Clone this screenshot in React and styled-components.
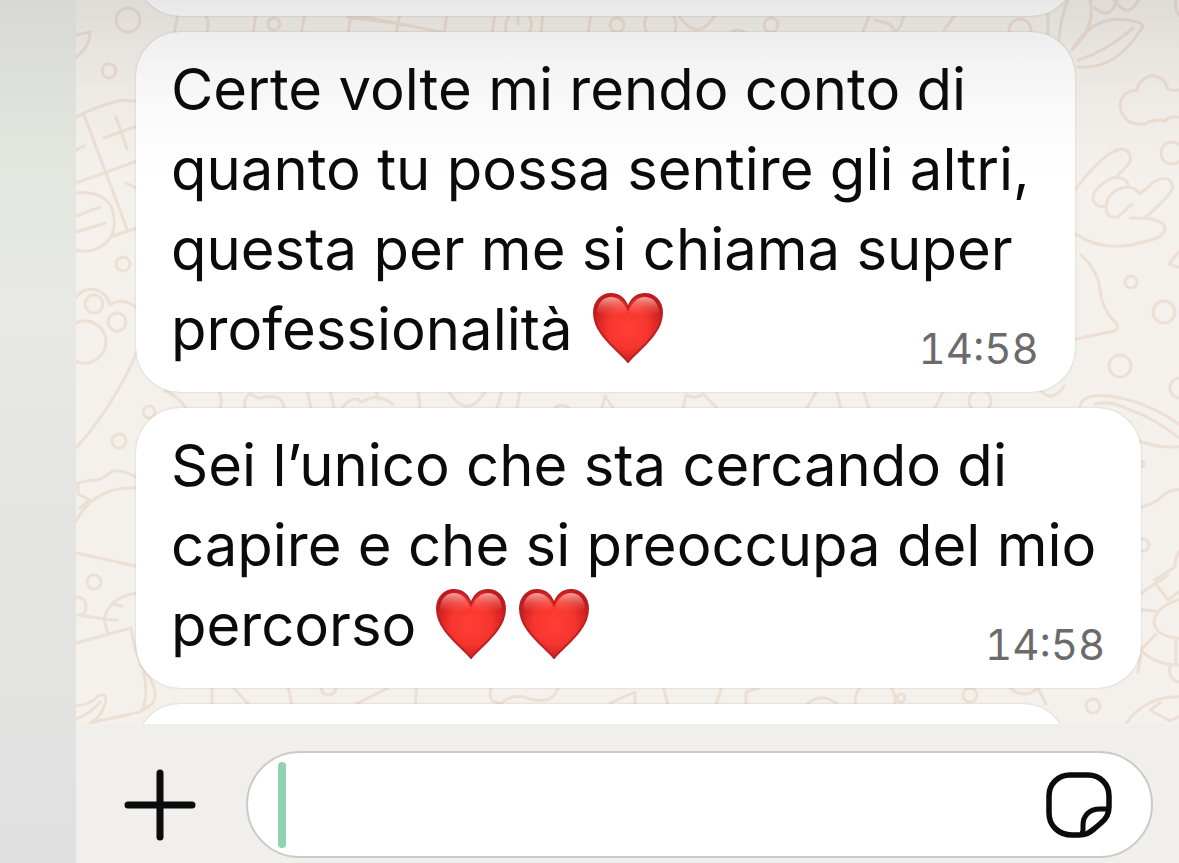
import React, { useState } from "react";
import styled, { createGlobalStyle } from "styled-components";

const messages = [
  {
    id: 1,
    lines: [
      "Certe volte mi rendo conto di",
      "quanto tu possa sentire gli altri,",
      "questa per me si chiama super",
      "professionalità",
    ],
    hearts: 1,
    time: "14:58",
  },
  {
    id: 2,
    lines: [
      "Sei l’unico che sta cercando di",
      "capire e che si preoccupa del mio",
      "percorso",
    ],
    hearts: 2,
    time: "14:58",
  },
];

// doodles of the chat wallpaper: [cx, cy, r]
const dots = [
  [128, 20, 12],
  [109, 71, 7],
  [123, 264, 7],
  [94, 304, 9],
  [117, 322, 9],
  [119, 441, 7],
  [149, 412, 6],
  [94, 582, 7],
  [274, 24, 6],
  [617, 25, 7],
  [771, 25, 7],
  [1020, 30, 11],
  [1172, 153, 11],
  [1131, 282, 6],
  [1164, 312, 11],
  [1120, 366, 11],
  [1180, 388, 10],
  [980, 401, 11],
  [1141, 464, 3],
  [1143, 545, 6],
  [901, 698, 4],
  [970, 695, 7],
  [1093, 706, 7],
];

const doodles = [
  // leaf and calculator
  "M76 35L90 32Q90 47 76 57",
  "M76 117Q100 105 118 101Q128 99 140 102M84 115L127 229M76 183L140 160M116 117L127 149M104 138L140 125M76 150L84 146",
  "M76 193Q102 190 112 208Q120 236 100 247Q88 254 76 250M76 216L100 207M76 232L105 223M113 236L140 227M126 183L140 190",
  // bear paw
  "M76 297A19 19 0 0 1 110 305A20 20 0 0 1 140 314M76 323A21 21 0 1 1 76 361",
  "M140 345Q115 405 76 448M165 391Q178 396 186 408",
  "M76 484Q85 480 98 480Q107 476 113 471Q122 469 140 479M78 484V494L90 500L80 508M76 521Q95 485 140 488M76 553L140 567",
  // cup with a plant
  "M76 597Q86 597 86 607Q86 616 78 615L104 619Q110 595 140 593M104 619L108 634M112 604L122 606M104 619L117 620",
  "M76 643L131 628Q134 650 143 670Q150 700 140 712L90 723M140 665Q162 690 152 704L140 712M76 706Q90 705 98 696Q106 692 106 700Q103 715 92 722M76 719Q90 714 100 702",
  // strip above the first message
  "M178 14L174 34M205 14Q211 24 206 34M256 14L253 34M305 14L301 34M351 14L348 34M360 16L441 32M393 23L348 17M400 14L396 34M447 14L444 34M495 14L492 34M510 14Q503 24 507 34M528 14Q535 24 528 34M518 14V24M543 14L541 34M591 14L588 34M648 14Q641 24 648 34M672 14Q679 24 674 34M678 14Q697 45 716 14M730 33Q738 27 746 33M870 14L862 34M875 20L890 24Q899 40 904 14M956 14L944 30M1048 14V34",
  // strip between the messages
  "M219 390Q223 400 220 408M245 408Q243 398 250 394Q258 400 265 397Q283 394 284 408M307 390L311 408M330 390L334 408M342 408Q352 394 362 402Q376 392 393 404M376 390L378 400M418 390L420 408M448 390Q467 422 486 390M502 390L497 408M520 390L517 408M555 408Q562 402 569 408M602 408L605 396L613 408M683 408L686 395Q696 400 703 394L717 408M817 390L807 408M836 390L841 408M863 390L869 408M944 390L935 408M1040 390Q1052 404 1064 386",
  // strip under the last message
  "M212 686V705M234 688L248 704M288 686L292 705M321 686Q321 695 328 695Q336 695 336 686M356 704L388 688M417 686L415 705M491 688Q487 703 501 703Q515 692 530 699Q552 705 558 688M610 703L635 692V704M663 686L668 705M722 686L716 705M746 705V692L758 688M807 704Q821 692 836 703M855 704Q855 692 861 686M890 686Q896 694 895 704M1010 688Q1024 700 1038 688L1046 704",
  // tulip
  "M1069 -4Q1060 20 1059 40M1089 -4Q1098 25 1072 50Q1095 10 1137 22Q1147 25 1139 32Q1115 70 1078 67M1078 60Q1105 52 1133 28M1095 8Q1112 22 1118 -4M1114 0Q1130 22 1140 -4M1179 15Q1173 8 1177 -4",
  // cloud
  "M1184 89Q1172 92 1168 89Q1163 74 1150 76Q1138 80 1137 90Q1121 91 1120 106Q1123 126 1145 124Q1153 118 1165 121Q1168 115 1184 118",
  // hand
  "M1076 189Q1105 150 1122 149Q1134 152 1129 164L1115 178M1093 200Q1092 188 1112 178Q1126 175 1129 187M1093 200Q1096 208 1106 206Q1108 192 1122 188Q1134 185 1140 194L1155 181Q1170 174 1173 187Q1172 194 1145 218M1106 206Q1105 219 1118 217L1132 204M1130 218Q1165 217 1165 229Q1164 237 1150 240Q1105 255 1076 234",
  "M1081 255Q1098 270 1100 290Q1102 310 1117 324Q1118 330 1114 331L1076 339M1184 245L1169 264L1184 269",
  // spoon
  "M1080 406Q1083 393 1110 396Q1150 402 1184 428M1095 404Q1110 400 1130 410Q1155 418 1184 442M1134 439Q1160 450 1184 446M1134 508Q1152 507 1165 494Q1172 489 1184 490M1184 546Q1174 555 1175 567L1155 580",
  // turtle
  "M1134 598L1168 575M1155 583L1168 600L1184 588M1134 609L1155 611M1184 598Q1155 606 1154 622Q1155 637 1184 639M1156 634L1141 650Q1155 666 1184 665M1176 640L1176 665M1170 666Q1167 682 1184 683M1141 655L1138 672",
  "M1126 724Q1145 695 1184 697M1160 703L1150 710L1170 721L1184 714",
];

const Wallpaper = () => (
  <WallpaperSvg
    viewBox="76 0 1103 724"
    preserveAspectRatio="xMinYMin slice"
    aria-hidden="true"
  >
    {doodles.map((d) => (
      <path key={d} d={d} />
    ))}
    {dots.map(([cx, cy, r]) => (
      <circle key={`${cx}-${cy}`} cx={cx} cy={cy} r={r} />
    ))}
  </WallpaperSvg>
);

const HeartShape =
  "M35 69C25 57 1 41 1 20C1 8 9 1 18 1C26 1 32 6 35 15C38 6 44 1 52 1C61 1 69 8 69 20C69 41 45 57 35 69Z";

const Heart = () => (
  <HeartSvg viewBox="0 0 70 70" role="img" aria-label="❤️">
    <defs>
      <radialGradient id="heartFill" cx="0.5" cy="0.5" r="0.6">
        <stop offset="0" stopColor="#ff3f35" />
        <stop offset="0.5" stopColor="#f7352f" />
        <stop offset="1" stopColor="#b81518" />
      </radialGradient>
      <linearGradient id="heartShine" x1="0" y1="0" x2="0" y2="1">
        <stop offset="0" stopColor="#ffb9b0" stopOpacity="0.85" />
        <stop offset="1" stopColor="#ff5a50" stopOpacity="0" />
      </linearGradient>
    </defs>
    <path d={HeartShape} fill="url(#heartFill)" />
    <path
      d="M4 19C5 9 11 4 18 4C25 4 31 9 34 19C27 25 11 26 4 19Z"
      fill="url(#heartShine)"
    />
    <path
      d="M36 19C39 9 45 4 52 4C59 4 65 9 66 19C59 26 43 25 36 19Z"
      fill="url(#heartShine)"
    />
    <path d={HeartShape} fill="none" stroke="#b92024" strokeWidth="2" />
  </HeartSvg>
);

const Message = ({ message }) => (
  <Bubble>
    <Text>
      {message.lines.map((line, i) => (
        <React.Fragment key={line}>
          {i > 0 && <br />}
          {line}
        </React.Fragment>
      ))}
      <Hearts>
        {Array.from({ length: message.hearts }, (_, i) => (
          <Heart key={i} />
        ))}
      </Hearts>
    </Text>
    <Time>{message.time}</Time>
  </Bubble>
);

const App = () => {
  const [draft, setDraft] = useState("");

  return (
    <>
      <GlobalStyle />
      <Screen>
        <Rail />
        <Chat>
          <Conversation>
            <Wallpaper />
            <MessageList>
              <Peek $width={943} />
              {messages.map((message) => (
                <Message key={message.id} message={message} />
              ))}
              <Peek $width={931} />
            </MessageList>
            <TopShade />
          </Conversation>
          <Composer>
            <IconButton type="button" aria-label="Aggiungi">
              <svg width="72" height="72" viewBox="0 0 72 72">
                <path
                  d="M36 4V68M4 36H68"
                  stroke="#0b0b0b"
                  strokeWidth="7"
                  strokeLinecap="round"
                />
              </svg>
            </IconButton>
            <Field>
              {!draft && <Caret />}
              <Input
                aria-label="Messaggio"
                value={draft}
                onChange={(e) => setDraft(e.target.value)}
              />
              <IconButton type="button" aria-label="Sticker">
                <svg width="68" height="68" viewBox="0 0 68 68" fill="none">
                  <path
                    d="M25 4H43C55 4 64 13 64 25V36C64 44 61 48 56 52L49 58C44 62 41 64 34 64H27C14 64 4 55 4 42V25C4 13 13 4 25 4Z"
                    stroke="#0b0b0b"
                    strokeWidth="5.5"
                  />
                  <path
                    d="M63 38H55C44 38 38 45 38 54V59L37 63"
                    stroke="#0b0b0b"
                    strokeWidth="5"
                  />
                </svg>
              </IconButton>
            </Field>
          </Composer>
        </Chat>
      </Screen>
    </>
  );
};

const GlobalStyle = createGlobalStyle`
  * {
    box-sizing: border-box;
  }
  body {
    margin: 0;
    font-family: Inter, "Liberation Sans", sans-serif;
    color: #0b0b0b;
  }
`;

const Screen = styled.div`
  display: flex;
  height: 100vh;
  overflow: hidden;
`;

const Rail = styled.aside`
  flex: none;
  width: 76px;
  background: linear-gradient(
    to bottom,
    #d8d9d4 0,
    #e3e5df 18%,
    #e8e9e4 36%,
    #e4e5e3 60%,
    #e0e0e0 100%
  );
`;

const Chat = styled.main`
  flex: 1;
  min-width: 0;
  display: flex;
  flex-direction: column;
  background: #f1efeb;
`;

const Conversation = styled.section`
  position: relative;
  flex: 1;
  min-height: 0;
  overflow: hidden;
  background: #f4f1ec;
`;

const WallpaperSvg = styled.svg`
  position: absolute;
  inset: 0;
  width: 100%;
  height: 100%;
  fill: none;
  stroke: #ecdfd4;
  stroke-width: 3;
  stroke-linecap: round;
  stroke-linejoin: round;
`;

const MessageList = styled.div`
  position: relative;
  display: flex;
  flex-direction: column;
  align-items: flex-start;
  gap: 16px;
  margin-top: -84px;
  padding-left: 60px;
`;

const Bubble = styled.article`
  padding: 17px 36px 23px 35px;
  border-radius: 44px;
  background: #fff;
  box-shadow: 0 0 2px rgba(90, 70, 60, 0.3);
`;

// neighbouring messages, cut off by the edges of the conversation
const Peek = styled(Bubble)`
  flex: none;
  width: ${({ $width }) => $width}px;
  max-width: 90%;
  height: 100px;
`;

const Text = styled.p`
  margin: 0;
  padding-right: 9px;
  font-size: 58px;
  line-height: 80px;
  white-space: nowrap;
`;

const Hearts = styled.span`
  display: inline-flex;
  gap: 13px;
  margin-left: 20px;
  vertical-align: -13px;
`;

const HeartSvg = styled.svg`
  width: 70px;
  height: 70px;
`;

const Time = styled.time`
  display: block;
  margin-top: -40px;
  font-size: 42px;
  line-height: 40px;
  font-variant-numeric: tabular-nums;
  text-align: right;
  color: #6b6b6b;
`;

const TopShade = styled.div`
  position: absolute;
  inset: 0 0 auto;
  height: 180px;
  pointer-events: none;
  background: linear-gradient(
    to bottom,
    rgba(0, 0, 0, 0.09),
    rgba(0, 0, 0, 0.05) 30%,
    rgba(0, 0, 0, 0.02) 62%,
    transparent
  );
`;

const Composer = styled.form`
  flex: none;
  display: flex;
  align-items: center;
  gap: 50px;
  padding: 27px 26px 5px 48px;
`;

const IconButton = styled.button`
  flex: none;
  display: flex;
  padding: 0;
  border: none;
  background: transparent;
  cursor: pointer;
`;

const Field = styled.div`
  flex: 1;
  min-width: 0;
  height: 107px;
  display: flex;
  align-items: center;
  padding: 0 38px 0 30px;
  border: 2px solid #cbc9c9;
  border-radius: 54px;
  background: #fff;
`;

const Caret = styled.span`
  flex: none;
  width: 8px;
  height: 86px;
  border-radius: 4px;
  background: #8fd3b3;
`;

const Input = styled.input`
  flex: 1;
  min-width: 0;
  height: 80px;
  border: none;
  outline: none;
  background: transparent;
  font: inherit;
  font-size: 58px;
`;

export default App;
